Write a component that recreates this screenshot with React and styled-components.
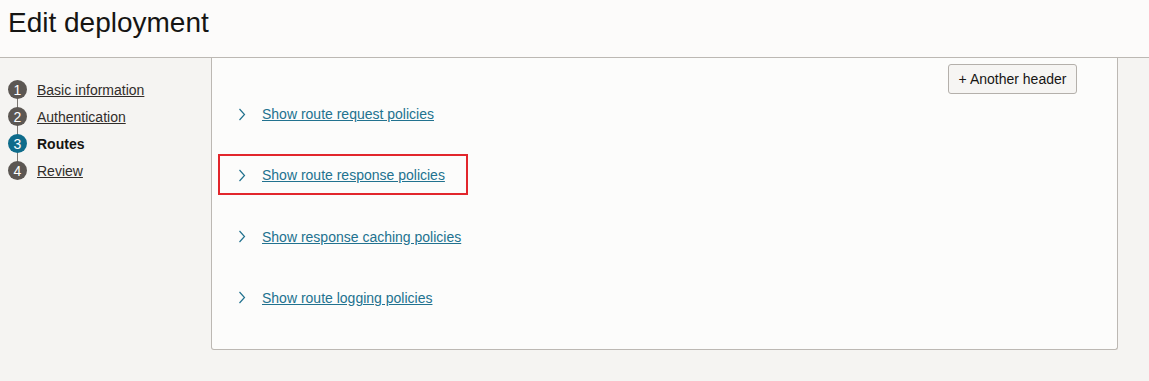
import React from 'react'
import styled, { createGlobalStyle } from 'styled-components'

const steps = [
  { n: 1, label: 'Basic information' },
  { n: 2, label: 'Authentication' },
  { n: 3, label: 'Routes', active: true },
  { n: 4, label: 'Review' },
]

const policies = [
  { label: 'Show route request policies' },
  { label: 'Show route response policies', highlighted: true },
  { label: 'Show response caching policies' },
  { label: 'Show route logging policies' },
]

function Chevron() {
  return (
    <svg width="8" height="13" viewBox="0 0 8 13" fill="none">
      <polyline points="1.5,1 6.5,6.5 1.5,12" stroke="#22728f" strokeWidth="1.2" />
    </svg>
  )
}

function App() {
  return (
    <>
      <GlobalStyle />
      <Header>
        <Title>Edit deployment</Title>
      </Header>
      <Body>
        <Nav>
          {steps.map((s, i) => (
            <Step key={s.n} last={i === steps.length - 1}>
              <Badge active={s.active}>{s.n}</Badge>
              <StepLabel active={s.active}>{s.label}</StepLabel>
            </Step>
          ))}
        </Nav>
        <Panel>
          <Toolbar>
            <Button>+ Another header</Button>
          </Toolbar>
          <PolicyList>
            {policies.map(p => (
              <PolicyRow key={p.label} highlighted={p.highlighted}>
                <Chevron />
                <PolicyLink href="#">{p.label}</PolicyLink>
              </PolicyRow>
            ))}
          </PolicyList>
        </Panel>
      </Body>
    </>
  )
}

const GlobalStyle = createGlobalStyle`
  body {
    margin: 0;
    background: #f5f4f2;
    font-family: "Liberation Sans", Arial, sans-serif;
    color: #161513;
  }
`

const Header = styled.header`
  height: 58px;
  box-sizing: border-box;
  background: #fcfbfa;
  border-bottom: 1px solid #bcb8b3;
  padding: 7px 8px 0;
`

const Title = styled.h1`
  margin: 0;
  font-size: 28px;
  line-height: 32px;
  font-weight: normal;
  color: #161513;
`

const Body = styled.div`
  display: flex;
`

const Nav = styled.nav`
  width: 211px;
  padding: 18px 0 0 8px;
  box-sizing: border-box;
  display: flex;
  flex-direction: column;
`

const Step = styled.div`
  position: relative;
  display: flex;
  align-items: center;
  gap: 10px;
  height: 27px;

  &::after {
    content: '';
    display: ${p => (p.last ? 'none' : 'block')};
    position: absolute;
    left: 9px;
    top: 13px;
    width: 1px;
    height: 27px;
    background: #7a7570;
  }
`

const Badge = styled.span`
  position: relative;
  z-index: 1;
  width: 19px;
  height: 19px;
  border-radius: 50%;
  background: ${p => (p.active ? '#0f6c8b' : '#5c5753')};
  color: #fff;
  font-size: 14px;
  display: flex;
  align-items: center;
  justify-content: center;
`

const StepLabel = styled.span`
  font-size: 14px;
  color: ${p => (p.active ? '#161513' : '#312d2a')};
  font-weight: ${p => (p.active ? 'bold' : 'normal')};
  text-decoration: ${p => (p.active ? 'none' : 'underline')};
`

const Panel = styled.section`
  width: 907px;
  height: 292px;
  box-sizing: border-box;
  background: #fcfcfb;
  border: 1px solid #bcb8b3;
  border-top: none;
  border-radius: 0 0 3px 3px;
  display: flex;
  flex-direction: column;
`

const Toolbar = styled.div`
  display: flex;
  justify-content: flex-end;
  padding: 6px 40px 0 0;
`

const Button = styled.button`
  height: 30px;
  width: 129px;
  padding: 0;
  font-family: inherit;
  font-size: 14px;
  color: #161513;
  background: #f6f5f3;
  border: 1px solid #b4b0ab;
  border-radius: 3px;
`

const PolicyList = styled.div`
  display: flex;
  flex-direction: column;
  gap: 41.3px;
  padding: 10px 0 0 26px;
`

const PolicyRow = styled.div`
  position: relative;
  display: flex;
  align-items: center;
  gap: 16px;
  height: 20px;

  &::after {
    content: '';
    display: ${p => (p.highlighted ? 'block' : 'none')};
    position: absolute;
    left: -20px;
    top: -11px;
    width: 250px;
    height: 41px;
    box-sizing: border-box;
    border: 2px solid #e2262c;
  }
`

const PolicyLink = styled.a`
  font-size: 14px;
  color: #22728f;
  text-decoration: underline;
`

export default App
